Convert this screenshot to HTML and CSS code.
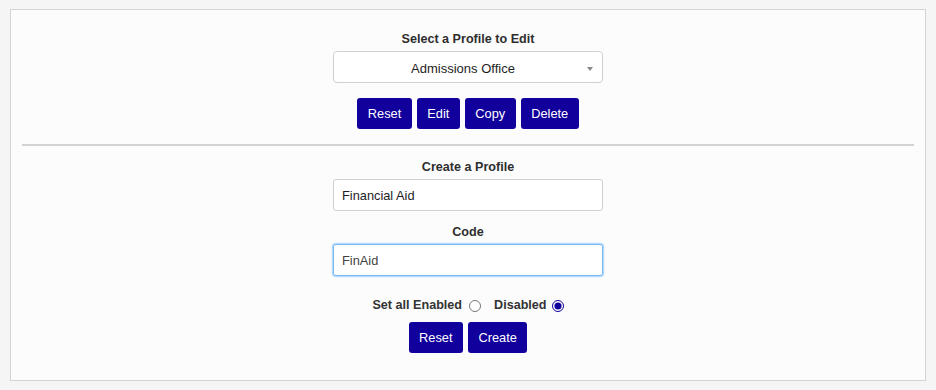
FILE: index.html
```html
<!DOCTYPE html>
<html lang="en">
<head>
    <meta charset="UTF-8">
    <meta name="viewport" content="width=device-width, initial-scale=1.0">
    <title>Profiles</title>
    <link rel="stylesheet" href="styles.css">
</head>
<body>
    <div class="panel">
        <div id="editProfile" class="section">
            <div class="field-label">Select a Profile to Edit</div>
            <div class="select-box">
                <span>Admissions Office</span>
                <span class="select-arrow"></span>
            </div>
            <div class="btn-row">
                <button class="btn">Reset</button>
                <button class="btn">Edit</button>
                <button class="btn">Copy</button>
                <button class="btn">Delete</button>
            </div>
        </div>

        <hr class="divider">

        <form id="newProfileForm" class="section">
            <div class="field-label">Create a Profile</div>
            <input type="text" class="text-input" id="profileName" value="Financial Aid">
            <div class="field-label code-label">Code</div>
            <input type="text" class="text-input focused" id="profileCode" value="FinAid">
            <div class="status-row">
                <label class="status-label">Set all Enabled <input type="radio" name="status" class="enabled-radio"></label>
                <label class="status-label">Disabled <input type="radio" name="status" class="disabled-radio" checked></label>
            </div>
            <div class="btn-row create-row">
                <button type="button" class="btn">Reset</button>
                <button type="button" class="btn">Create</button>
            </div>
        </form>
    </div>
</body>
</html>
```

FILE: styles.css
```css
body {
    font-family: "Liberation Sans", Arial, sans-serif;
    font-size: 12.6px;
    line-height: 15px;
    color: #333;
    background-color: #f5f5f5;
    margin: 9px 10px;
    padding: 0;
}
.panel {
    background-color: #fcfcfc;
    border: 1px solid #d4d4d4;
    padding: 22px 11px 27px;
}
.section {
    display: flex;
    flex-direction: column;
    align-items: center;
    margin: 0;
}
.field-label {
    font-weight: bold;
    color: #2e2e2e;
}
.select-box {
    width: 270px;
    height: 32px;
    box-sizing: border-box;
    margin-top: 4px;
    padding: 3px 10px 0 0;
    border: 1px solid #d0d0d0;
    border-radius: 4px;
    background-color: #fff;
    color: #1e1e1e;
    font-size: 13px;
    display: flex;
    align-items: center;
    justify-content: center;
    position: relative;
}
.select-arrow {
    position: absolute;
    right: 9px;
    top: 15px;
    border-left: 3px solid transparent;
    border-right: 3px solid transparent;
    border-top: 4px solid #888;
}
.btn-row {
    display: flex;
    gap: 5px;
    margin-top: 15px;
}
.btn {
    height: 31px;
    padding: 0 10.5px;
    background-color: #11009b;
    color: #fff;
    border: none;
    border-radius: 3px;
    font-family: inherit;
    font-size: 12.8px;
    cursor: pointer;
}
.divider {
    border: none;
    height: 2px;
    background-color: #d2d2d2;
    margin: 15px 0 14px;
}
.text-input {
    width: 270px;
    height: 32px;
    box-sizing: border-box;
    margin: 4px 0 0;
    padding: 0 8px;
    border: 1px solid #d0d0d0;
    border-radius: 3px;
    background-color: #fff;
    font-family: inherit;
    font-size: 12.8px;
    color: #1e1e1e;
    outline: none;
}
.text-input.focused {
    border-color: #7ab8f5;
    box-shadow: 0 0 0 1px #b5d8fb, 0 0 3px #8cc4fa;
    color: #444;
}
.code-label {
    margin-top: 14px;
}
.status-row {
    display: flex;
    align-items: center;
    margin-top: 22px;
    height: 15px;
}
.status-label {
    display: flex;
    align-items: center;
    font-weight: bold;
}
.status-row input[type="radio"] {
    width: 12px;
    height: 12px;
    margin: 0;
    accent-color: #11009b;
}
.enabled-radio {
    margin: 0 13px 0 7px !important;
}
.disabled-radio {
    margin-left: 5px !important;
}
.create-row {
    margin-top: 9px;
}
```
